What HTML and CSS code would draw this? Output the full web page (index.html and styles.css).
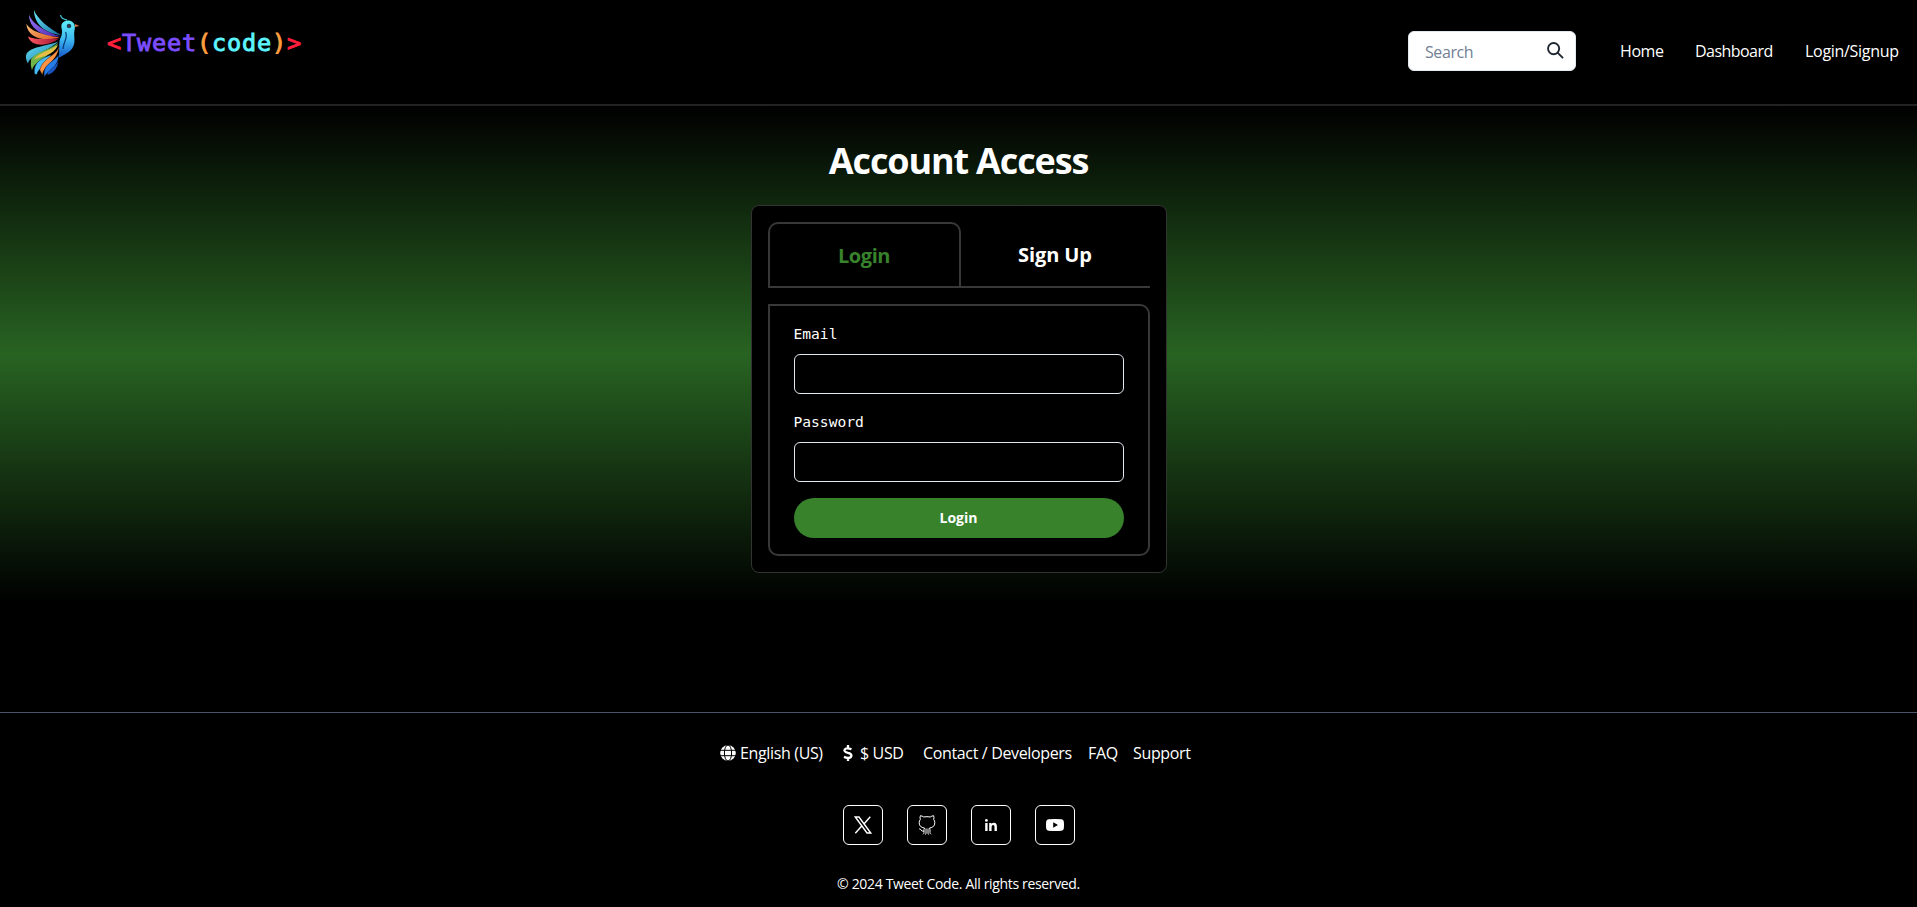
FILE: index.html
```html
<!DOCTYPE html>
<html lang="en">
<head>
<meta charset="utf-8">
<title>Tweet Code</title>
<link rel="stylesheet" href="styles.css">
</head>
<body>
<header class="header">
  <svg class="bird" viewBox="0 0 72 80" aria-label="Tweet Code bird">
    <defs>
      <linearGradient id="body" x1="0" y1="0" x2="0" y2="1"><stop offset="0" stop-color="#62eef8"/><stop offset=".5" stop-color="#3db9f2"/><stop offset="1" stop-color="#1556c8"/></linearGradient>
      <linearGradient id="cyan" x1="0" y1="0" x2="1" y2="1"><stop offset="0" stop-color="#6cecff"/><stop offset="1" stop-color="#126a9c"/></linearGradient>
      <linearGradient id="violet" x1="0" y1="0" x2="1" y2="1"><stop offset="0" stop-color="#9c7bff"/><stop offset="1" stop-color="#4a25a8"/></linearGradient>
      <linearGradient id="orange" x1="0" y1="0" x2="1" y2="1"><stop offset="0" stop-color="#ffc07a"/><stop offset="1" stop-color="#d95a20"/></linearGradient>
      <linearGradient id="red" x1="0" y1="0" x2="1" y2="0"><stop offset="0" stop-color="#ff5b62"/><stop offset="1" stop-color="#9e1234"/></linearGradient>
    </defs>
    <path fill="url(#body)" d="M45.500 24C44.500 18.500 48.500 16.500 52.500 16.500C57.500 17 60 21 58.500 26C57.500 31 59 34 58.300 39C57 47 50 50 42.500 54C44 49 42.500 44 43.500 38C43.500 34 47.500 31 45.500 24Z"/>
    <path fill="none" stroke="#093a75" stroke-width="1.200" d="M49.500 28C52.500 34 47.500 37 47 45"/>
    <path fill="url(#cyan)" d="M18 6C21 15 34 25 45 31C30 29.500 18 20.500 18 6Z"/>
    <path fill="url(#violet)" d="M13 10.500C16 20 31 28.500 44.500 32.300C29 34 13 26 13 10.500Z"/>
    <path fill="url(#orange)" d="M10.300 19.500C14 27.500 30 31.500 43.500 33.500C29 38 11 34.500 10.300 19.500Z"/>
    <path fill="url(#red)" d="M12 32.500C20 36.500 33 34.500 43 34.500C32 43 15 43 12 32.500Z"/>
    <path fill="url(#cyan)" d="M42.500 37.500C29 42.500 14 43 10.500 50Q8.700 54 12 59.500C14 51 31 48 42.500 37.500Z"/>
    <path fill="#6fb548" d="M42 39C32 47 19 48 15 55.500Q14 61 16 66.500C18 56 35 54 42 39Z"/>
    <path fill="#e8bd45" d="M42 41C34 47 21 49 18.500 55.500C26 52 37 52 42 41Z"/>
    <path fill="#45baf4" stroke="#04121f" stroke-width=".4" d="M35 51C26 54 17 58 18.500 70L21 70.500C22 63 34 61 35 51Z"/>
    <path fill="#ff9343" stroke="#1a0c04" stroke-width=".4" d="M43 42C41 52 26 54 23.800 66L26.500 71C27 61 42 58 43 42Z"/>
    <path fill="#277de8" stroke="#04121f" stroke-width=".4" d="M42.500 51C37 59 26 60 28.500 73C31.500 66 43 63 42.500 51Z"/>
    <path fill="#1954bd" d="M42.500 57C40 63 31 65 31.500 71Q41 68 42.500 57Z"/>
    <circle cx="53" cy="22" r="2.300" fill="#174965"/><circle cx="53" cy="22" r="1.100" fill="#4a2a28"/>
    <path fill="#d0703c" d="M59 20L63.500 22L59 23Z"/>
    <path fill="none" stroke="#3cbccb" stroke-width="1.300" d="M44.500 11Q45 15 51 16"/>
  </svg>
  <div class="wordmark"><span class="red">&lt;</span><span class="violet">Tweet</span><span class="orange">(</span><span class="cyan">code</span><span class="orange">)</span><span class="red">&gt;</span></div>
  <div class="search">
    <input class="search-input" type="text" placeholder="Search">
    <svg class="search-icon" viewBox="0 0 18 18"><circle cx="7" cy="7" r="5.900"/><path d="M11.200 11.200L17 17"/></svg>
  </div>
  <nav class="nav"><a class="home">Home</a><a class="dash">Dashboard</a><a class="sign">Login/Signup</a></nav>
</header>
<main class="main">
  <h1 class="title">Account Access</h1>
  <section class="card">
    <div class="tabs"><div class="tab active">Login</div><div class="tab second">Sign Up</div></div>
    <form class="panel">
      <label class="label" for="email">Email</label>
      <input class="field" id="email" type="email">
      <label class="label" for="password">Password</label>
      <input class="field" id="password" type="password">
      <button class="submit" type="button">Login</button>
    </form>
  </section>
</main>
<footer class="footer">
  <div class="links">
    <svg class="globe" viewBox="0 0 16 16"><circle cx="8" cy="8" r="7.800" fill="#fff"/><g fill="none" stroke="#000" stroke-width="1"><ellipse cx="8" cy="8" rx="3.600" ry="8"/><path d="M0 5.300H16M0 10.700H16"/></g></svg>
    <span class="lang">English (US)</span>
    <svg class="dollar" viewBox="0 0 10 16"><path fill="none" stroke="#fff" stroke-width="2.300" d="M8.500 4.300Q5 2.800 3 3.500Q1 4.500 1.700 6Q2.300 7.200 5 7.900Q8.500 8.700 8.400 10.700Q8.200 13 5 13Q3 12.900 1 11.900M5 0V3.500M5 12.500V16"/></svg>
    <span class="usd">$ USD</span>
    <a class="contact">Contact / Developers</a>
    <a class="faq">FAQ</a>
    <a class="support">Support</a>
  </div>
  <div class="socials">
    <a class="social"><svg width="18" height="18" viewBox="0 0 18 18"><path fill="none" stroke="#fff" stroke-width="1.400" d="M1.300 1H5L16.700 17H13ZM16.300 .7L9.900 8M7.700 10L1.300 17.300"/></svg></a>
    <a class="social"><svg width="18" height="20" viewBox="0 0 18 20"><g fill="none" stroke="#fff" stroke-width="1" stroke-linejoin="round"><path d="M6.500 13C3 12.500 1.200 11 1.200 7.700Q1.200 5.800 2.300 4.500Q1.700 2.600 2.400 .7Q4 .8 5.800 2Q9 1.300 12.200 2Q14 .8 15.600 .7Q16.300 2.600 15.700 4.500Q16.800 5.800 16.800 7.700C16.800 11 15 12.500 11.500 13"/><path d="M6.500 13Q5.700 14 6 17.500Q5.900 18.800 5 19.300M11.500 13Q12.300 14 12 17.500Q12.100 18.800 13 19.300M8 13.500V18Q8 19 7.500 19.500M10 13.500V18Q10 19 10.500 19.500M1.200 13.800Q2.500 13.800 3 15Q3.800 16.500 6 16.200"/></g></svg></a>
    <a class="social"><svg width="12" height="12" viewBox="0 0 12 12" fill="#fff"><circle cx="1.400" cy="1.400" r="1.400"/><path d="M.2 4H2.600V12H.2ZM4.200 4H6.500V5.100Q7.200 3.800 9 3.800Q11.900 3.800 11.900 7.300V12H9.500V7.800Q9.500 5.900 8.200 5.900Q6.600 5.900 6.600 8V12H4.200Z"/></svg></a>
    <a class="social"><svg width="18" height="12" viewBox="0 0 18 12"><path fill="#fff" fill-rule="evenodd" d="M2.500 .3Q9-.3 15.500 .3Q17.600 .5 17.800 2.500Q18.200 6 17.800 9.500Q17.600 11.500 15.500 11.700Q9 12.300 2.500 11.700Q.4 11.500 .2 9.500Q-.2 6 .2 2.500Q.4 .5 2.500 .3ZM7.200 3.300V8.700L12 6Z"/></svg></a>
  </div>
  <div class="copy">© 2024 Tweet Code. All rights reserved.</div>
</footer>
</body>
</html>
```
FILE: styles.css
```css
* { box-sizing: border-box; }
body { margin: 0; background: #000; color: #fff; font: 16px/24px "Open Sans", sans-serif; height: 907px; overflow: hidden; display: flex; flex-direction: column; }
.header { height: 106px; flex: none; border-bottom: 2px solid #222; display: flex; align-items: flex-start; padding-left: 16px; }
.bird { width: 72px; height: 80px; margin-top: 4px; flex: none; }
.wordmark { margin: 28px 0 0 19px; font: 23.5px/30px "DejaVu Sans Mono", monospace; letter-spacing: .85px; white-space: nowrap; -webkit-text-stroke: .9px currentColor; }
.red { color: #ff1f3d; }
.violet { color: #7c4dff; }
.orange { color: #ff9f3f; }
.cyan { color: #5cf5ff; }
.search { margin: 31px 0 0 auto; width: 168px; height: 40px; flex: none; background: #fff; border: 1px solid #e2e8f0; border-radius: 6px; display: flex; align-items: center; padding: 0 11px 0 16px; }
.search-input { width: 122px; flex: none; border: 0; padding: 2px 0 0; background: none; outline: 0; font: 16px/24px "Open Sans", sans-serif; letter-spacing: -.4px; }
.search-input::placeholder { color: #718096; opacity: 1; }
.search-icon { width: 17px; height: 17px; flex: none; fill: none; stroke: #1f2733; stroke-width: 2; margin-bottom: 1px; }
.nav { display: flex; flex: none; width: 341px; padding-left: 44px; margin-top: 39px; white-space: nowrap; letter-spacing: -.4px; }
.home { width: 75px; }
.dash { width: 109px; letter-spacing: -.55px; }
.sign { padding-left: 1px; letter-spacing: -.3px; }
.main { height: 606px; flex: none; padding-top: 34px; background: linear-gradient(#000, #286322 248px, #000 496px); display: flex; flex-direction: column; align-items: center; }
.title { margin: 0; height: 65px; font-size: 36px; line-height: 42px; font-weight: 700; letter-spacing: -1.15px; }
.card { width: 416px; height: 368px; border: 1px solid #333; border-radius: 8px; background: #000; padding: 16px; }
.tabs { display: flex; height: 66px; border-bottom: 2px solid #383838; }
.tab { font-size: 20px; line-height: 63px; font-weight: 700; text-align: center; letter-spacing: -.4px; }
.active { width: 193px; border: 2px solid #383838; border-bottom: 0; border-radius: 10px 10px 0 0; color: #37822b; }
.second { flex: 1; line-height: 65px; letter-spacing: -.1px; }
.panel { margin-top: 16px; height: 252px; border: 2px solid #383838; border-radius: 0 10px 10px 10px; padding: 16px 24px; display: flex; flex-direction: column; }
.label { font: 14.6px/24px "DejaVu Sans Mono", monospace; margin-bottom: 8px; }
.field { height: 40px; border: 1px solid #e2e8f0; border-radius: 6px; background: #000; color: #fff; padding: 0 16px; margin: 0 0 16px; outline: 0; }
.submit { height: 40px; border: 0; border-radius: 20px; background: #37822b; color: #fff; font: bold 14px/20px "Open Sans", sans-serif; }
.footer { flex: 1; border-top: 1px solid #4a5568; display: flex; flex-direction: column; align-items: center; }
.links { display: flex; align-items: center; width: 477px; height: 24px; margin-top: 28px; white-space: nowrap; letter-spacing: -.35px; }
.globe { width: 16px; height: 16px; flex: none; margin-right: 4px; }
.lang { width: 103px; }
.dollar { width: 10px; height: 16px; flex: none; margin-right: 7px; }
.usd { width: 63px; }
.contact { width: 165px; }
.faq { width: 45px; }
.socials { display: flex; gap: 24px; margin-top: 40px; }
.social { width: 40px; height: 40px; border: 1px solid #fff; border-radius: 6px; display: flex; align-items: center; justify-content: center; }
.copy { margin-top: 28px; font-size: 14px; line-height: 21px; letter-spacing: -.34px; white-space: nowrap; }
```
